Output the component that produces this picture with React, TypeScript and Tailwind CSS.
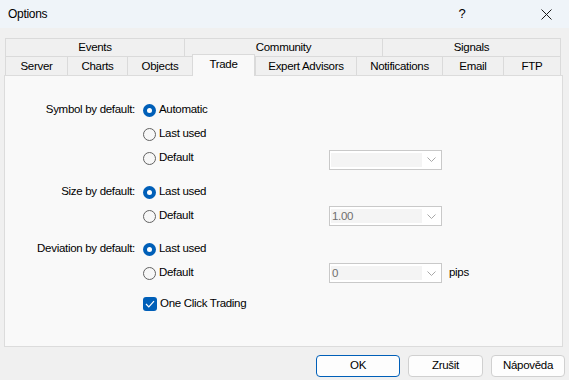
import React from 'react';

const font = { fontFamily: '"Liberation Sans", Arial, sans-serif' };

function Radio({ checked, label }: { checked?: boolean; label: string }) {
  return (
    <div className="flex items-center gap-[3px]">
      {checked ? (
        <span className="w-[13px] h-[13px] rounded-full bg-[#005fb8] flex items-center justify-center">
          <span className="w-[5px] h-[5px] rounded-full bg-white" />
        </span>
      ) : (
        <span className="w-[13px] h-[13px] rounded-full border border-[#626262] bg-[#f7f7f7]" />
      )}
      <span>{label}</span>
    </div>
  );
}

function Combo({ value }: { value?: string }) {
  return (
    <div className="w-[113px] h-[20px] border border-[#c9c9c9] bg-white flex items-center">
      <div className="flex-1 h-[14px] ml-[1px] bg-[#f4f4f4] text-[#6f6f6f] leading-[14px] pl-[1px]">{value}</div>
      <div className="w-[19px] flex items-center justify-center">
        <svg width="9" height="5" viewBox="0 0 9 5">
          <path d="M0.5 0.5 L4.5 4.5 L8.5 0.5" fill="none" stroke="#a8a8a8" strokeWidth="1" />
        </svg>
      </div>
    </div>
  );
}

const topTabs = [
  { label: 'Events', w: 'w-[179px]' },
  { label: 'Community', w: 'w-[198px]' },
  { label: 'Signals', w: 'w-[179px]' },
];

const bottomTabs = [
  { label: 'Server', w: 'w-[62px]' },
  { label: 'Charts', w: 'w-[60px]' },
  { label: 'Objects', w: 'w-[65px]' },
  { label: 'Trade', w: 'w-[63px]', active: true },
  { label: 'Expert Advisors', w: 'w-[101px]' },
  { label: 'Notifications', w: 'w-[86px]' },
  { label: 'Email', w: 'w-[61px]' },
  { label: 'FTP', w: 'w-[58px]' },
];

export default function App() {
  return (
    <div className="w-[569px] h-[380px] bg-[#f0f0f0] text-[11.5px] tracking-[-0.3px] text-black overflow-hidden" style={font}>
      {/* Title bar */}
      <div className="h-[28px] bg-[#eff4f9] flex items-center pl-[8px]">
        <span className="flex-1 text-[12px]">Options</span>
        <span className="w-[30px] text-center text-[13px] mr-[54px]">?</span>
        <div className="w-[30px] flex justify-center mr-[8px]">
          <svg width="11" height="11" viewBox="0 0 11 11">
            <path d="M0.5 0.5 L10.5 10.5 M10.5 0.5 L0.5 10.5" stroke="#1a1a1a" strokeWidth="1" />
          </svg>
        </div>
      </div>

      <div className="pt-[10px] pl-[4px]">
        {/* Tabs */}
        <div className="pl-[1px]">
          <div className="flex h-[18px]">
            {topTabs.map((t) => (
              <div
                key={t.label}
                className={`${t.w} border-t border-l last:border-r border-[#dadada] bg-[#f0f0f0] flex items-center justify-center pt-[1px]`}
              >
                {t.label}
              </div>
            ))}
          </div>
          <div className="flex h-[19px] items-end">
            {bottomTabs.map((t) =>
              t.active ? (
                <div
                  key={t.label}
                  className={`${t.w} h-[22px] -mb-px relative z-10 border-t border-l border-r border-[#dadada] bg-[#f9f9f9] flex items-center justify-center pb-[2px]`}
                >
                  {t.label}
                </div>
              ) : (
                <div
                  key={t.label}
                  className={`${t.w} h-[19px] border-t border-l last:border-r border-[#dadada] bg-[#f0f0f0] flex items-center justify-center pt-[1px]`}
                >
                  {t.label}
                </div>
              )
            )}
          </div>
        </div>

        {/* Panel */}
        <div className="w-[559px] h-[272px] border border-[#dcdcdc] bg-[#f9f9f9] pt-[22px]">
          <div className="grid grid-cols-[130px_178px_auto] gap-x-[8px] items-center">
            <div className="h-[24px] flex items-center justify-end">Symbol by default:</div>
            <Radio checked label="Automatic" />
            <div />
            <div className="h-[24px]" />
            <Radio label="Last used" />
            <div />
            <div className="h-[24px]" />
            <Radio label="Default" />
            <div className="flex items-center pt-[3px]"><Combo /></div>

            <div className="h-[24px] mt-[10px] flex items-center justify-end">Size by default:</div>
            <div className="mt-[10px]"><Radio checked label="Last used" /></div>
            <div className="mt-[10px]" />
            <div className="h-[24px]" />
            <Radio label="Default" />
            <div className="flex items-center"><Combo value="1.00" /></div>

            <div className="h-[24px] mt-[9px] flex items-center justify-end">Deviation by default:</div>
            <div className="mt-[9px]"><Radio checked label="Last used" /></div>
            <div className="mt-[9px]" />
            <div className="h-[24px]" />
            <Radio label="Default" />
            <div className="flex items-center gap-[7px]">
              <Combo value="0" />
              <span>pips</span>
            </div>

            <div className="h-[24px] mt-[7px]" />
            <div className="mt-[7px] flex items-center gap-[3px]">
              <span className="w-[14px] h-[14px] rounded-[3px] bg-[#005fb8] flex items-center justify-center">
                <svg width="10" height="8" viewBox="0 0 10 8">
                  <path d="M1 4 L3.8 6.8 L9 1.2" fill="none" stroke="white" strokeWidth="1.2" />
                </svg>
              </span>
              <span>One Click Trading</span>
            </div>
            <div className="mt-[7px]" />
          </div>
        </div>

        {/* Buttons */}
        <div className="flex justify-end gap-[8px] pr-[4px] mt-[8px]">
          <button className="w-[84px] h-[22px] rounded-[4px] border border-[#005fb8] bg-[#fdfdfd]">OK</button>
          <button className="w-[75px] h-[22px] rounded-[4px] border border-[#d0d0d0] bg-[#fdfdfd]">Zrušit</button>
          <button className="w-[74px] h-[22px] rounded-[4px] border border-[#d0d0d0] bg-[#fdfdfd]">Nápověda</button>
        </div>
      </div>
    </div>
  );
}
